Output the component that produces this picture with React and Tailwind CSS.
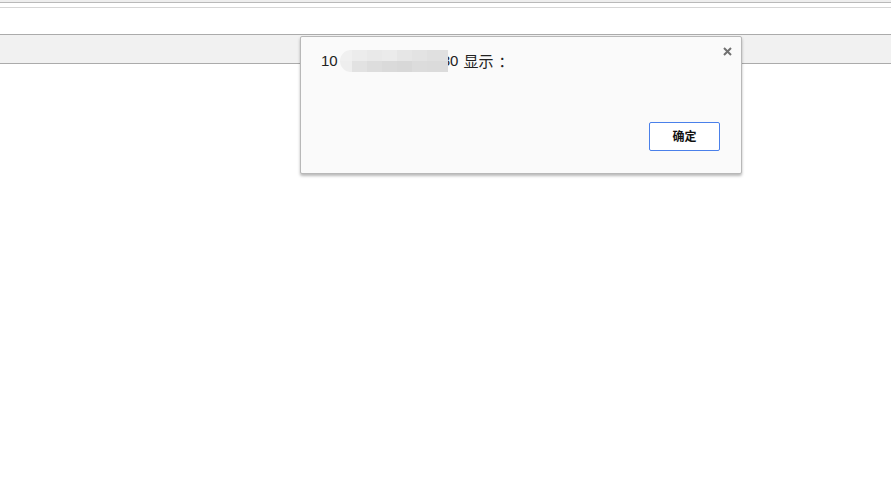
import React from 'react';

const mosaicTop = ['#f0f0f0', '#ececec', '#e9e9e9', '#ebebeb', '#e6e6e6', '#e3e3e3', '#e0e0e0'];
const mosaicBottom = ['#eeeeee', '#e2e2e2', '#dddddd', '#dadada', '#d8d8d8', '#dcdcdc', '#dbdbdb'];

const Mosaic = () => (
  <span className="relative z-10 ml-[2px] inline-grid grid-cols-[12px_15px_15px_15px_15px_15px_21px] grid-rows-[11px_11px] w-[108px] h-[22px] rounded-l-full rounded-r-[8px] overflow-hidden -mr-[6px] align-middle blur-[0.6px]">
    {mosaicTop.map((c, i) => (
      <span key={'t' + i} style={{ background: c }} />
    ))}
    {mosaicBottom.map((c, i) => (
      <span key={'b' + i} style={{ background: c }} />
    ))}
  </span>
);

const AlertDialog = () => (
  <div className="absolute left-[300px] top-[36px] w-[442px] h-[138px] flex flex-col bg-[#fafafa] border border-[#b8b8b8] rounded-[2px] shadow-[0_2px_3px_rgba(0,0,0,0.28)]">
    <button className="absolute right-[9px] top-[10px] w-[9px] h-[9px] flex items-center justify-center">
      <svg width="9" height="9" viewBox="0 0 9 9">
        <path d="M1 1 L8 8 M8 1 L1 8" stroke="#717171" strokeWidth="2" />
      </svg>
    </button>

    <div className="pl-[20px] pt-[13px] flex items-center text-[15px] leading-[22px] text-[#222]">
      <span>10</span>
      <Mosaic />
      <span className="relative">80</span>
      <span className="ml-[5px]" style={{ fontFamily: '"Noto Sans CJK SC", sans-serif' }}>
        显示
      </span>
      <span className="ml-[5px]" style={{ fontFamily: '"Noto Sans CJK SC", sans-serif' }}>
        ：
      </span>
    </div>

    <div className="mt-auto flex justify-end pr-[21px] pb-[22px]">
      <button className="w-[71px] h-[29px] border border-[#4a80ea] rounded-[2px] bg-white text-[12px] font-semibold text-[#111] flex items-center justify-center">
        确定
      </button>
    </div>
  </div>
);

export default function App() {
  return (
    <div
      className="relative min-h-[500px] bg-white flex flex-col"
      style={{ fontFamily: '"Liberation Sans", "Noto Sans CJK SC", sans-serif' }}
    >
      <div className="h-[2px] bg-[#eeeeee]" />
      <div className="h-px bg-[#b9b9b9]" />
      <div className="h-[4px] bg-white" />
      <div className="h-px bg-[#d6d6d6]" />
      <div className="h-[26px] bg-white" />
      <div className="h-px bg-[#ababab]" />
      <div className="h-[28px] bg-[#f1f1f1]" />
      <div className="h-px bg-[#ababab]" />
      <div className="flex-1 bg-white" />

      <AlertDialog />
    </div>
  );
}
